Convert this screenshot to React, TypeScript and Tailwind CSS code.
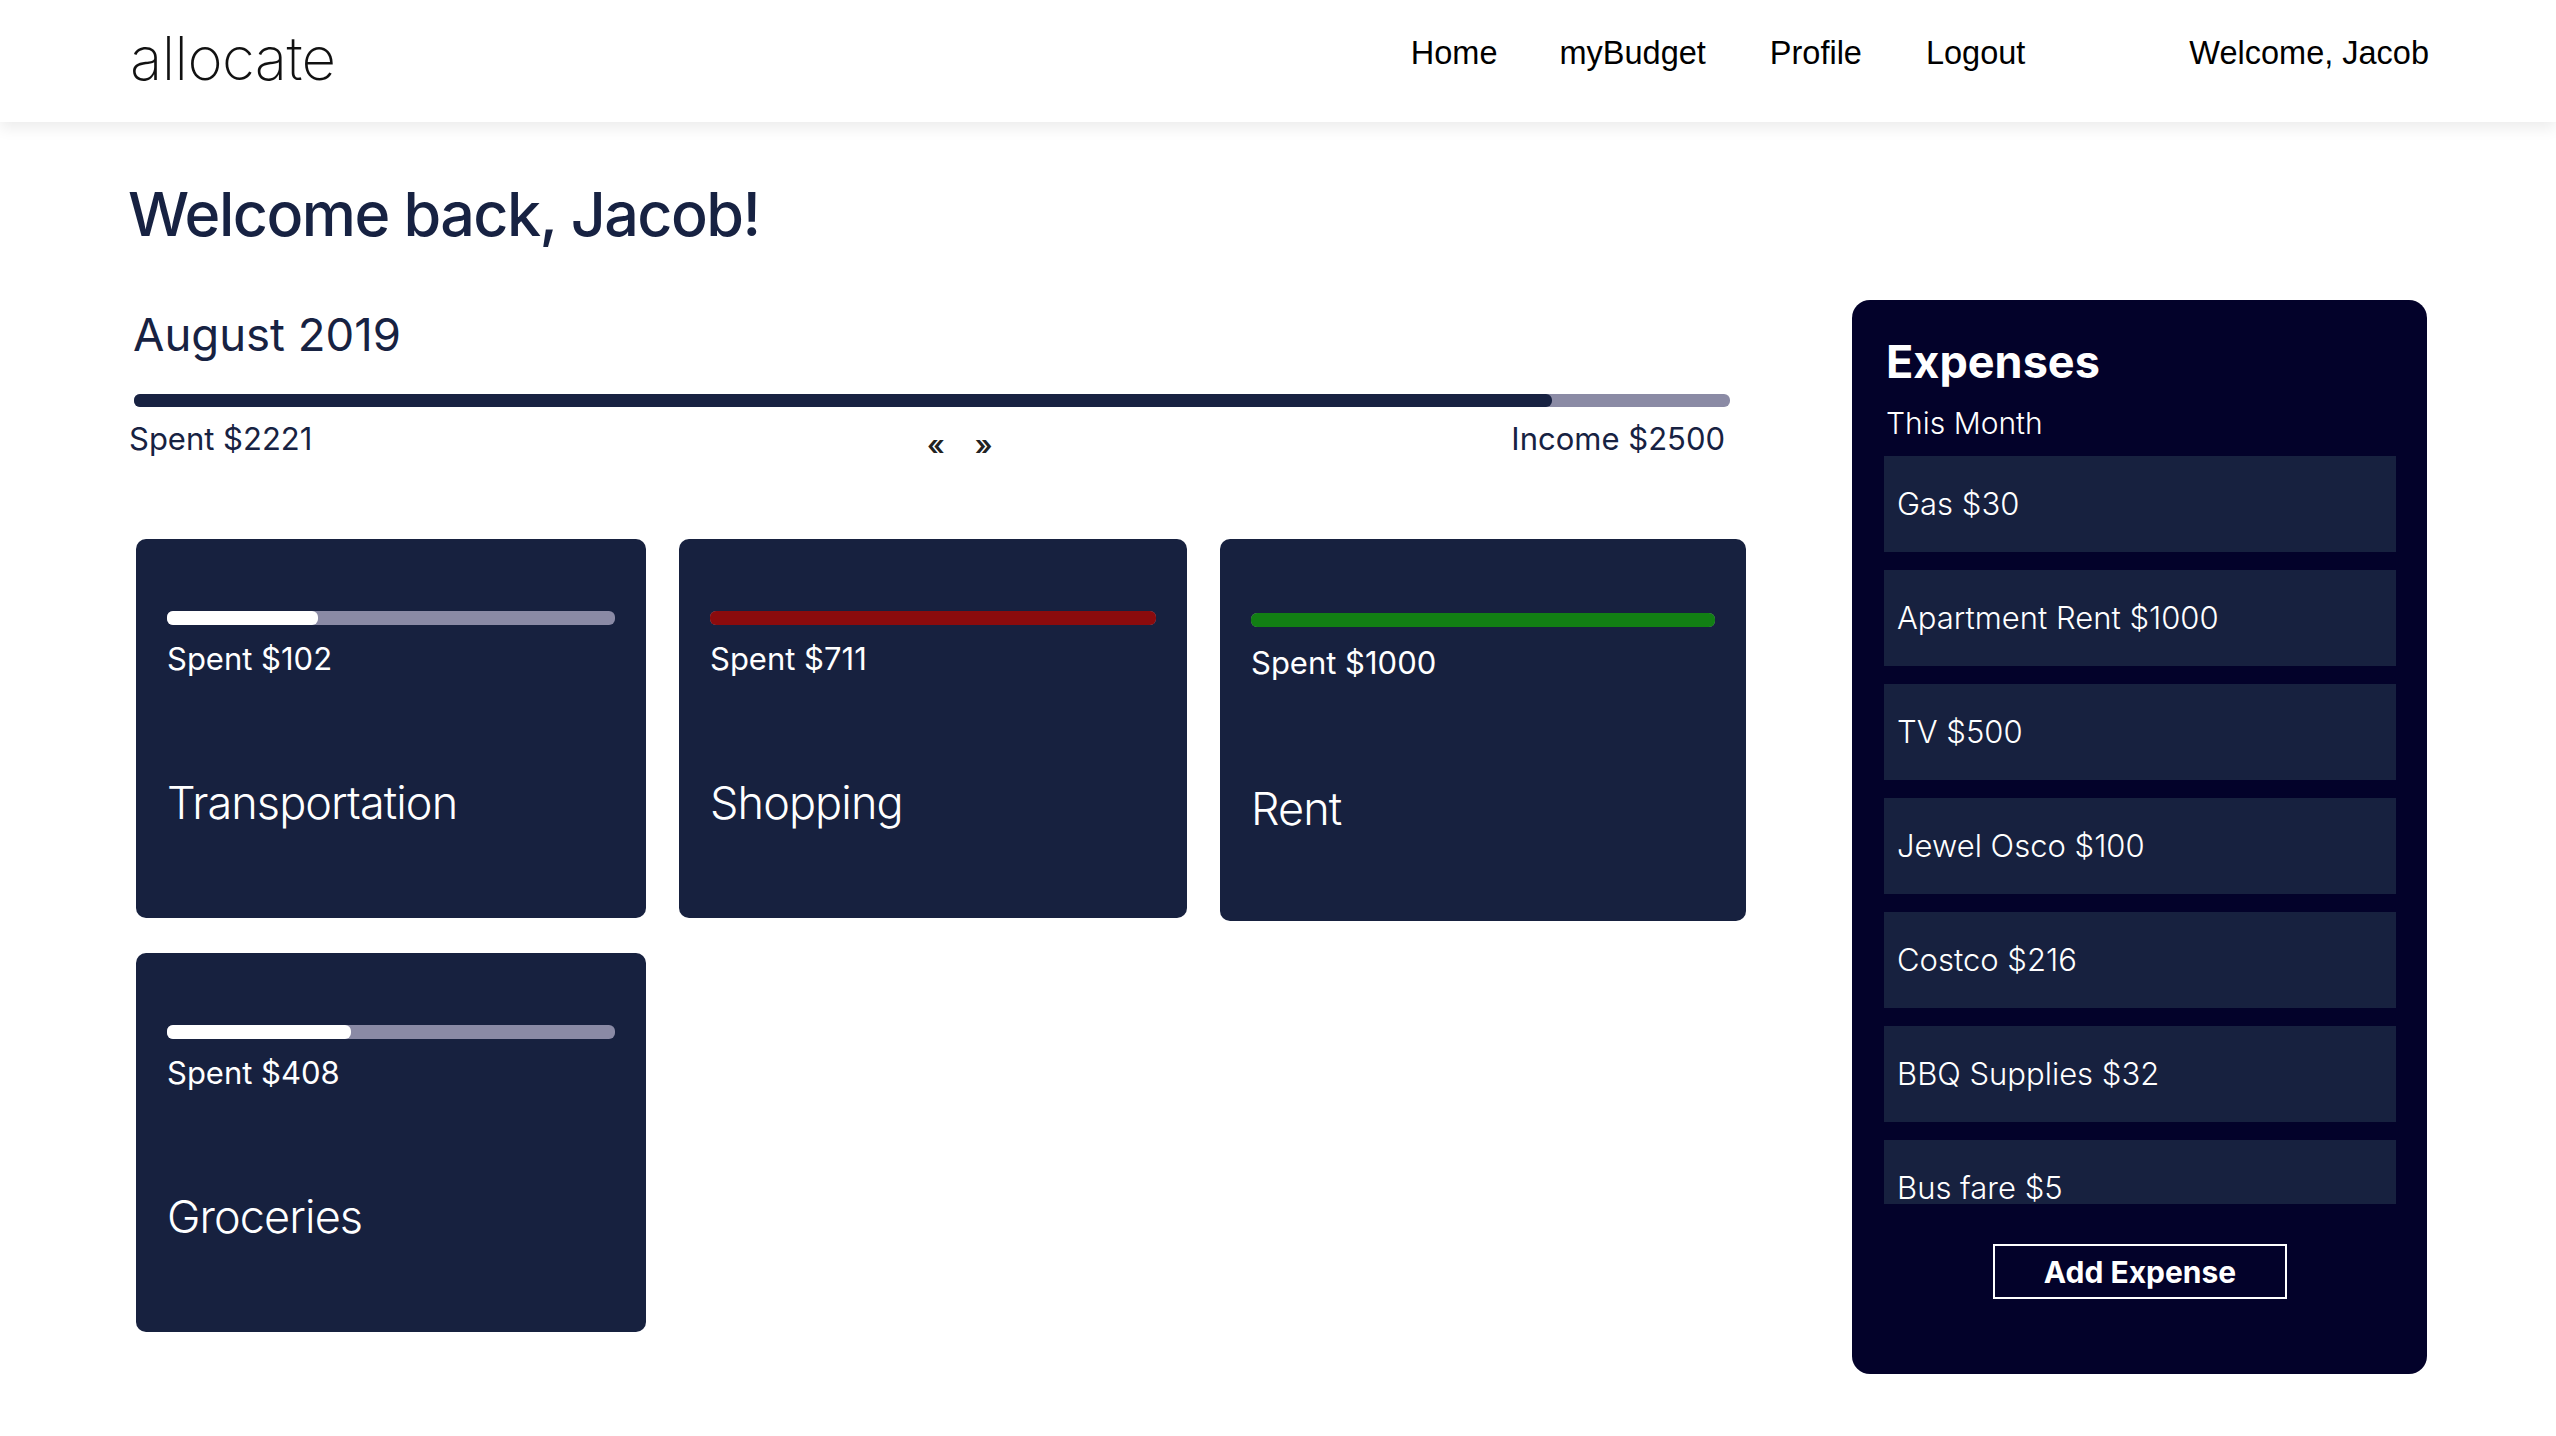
import React from 'react';

type Category = {
  name: string;
  spent: number;
  pct: number;
  fill: string;
  width: string;
  height: string;
  top: string;
  spentGap: string;
  nameGap: string;
};

const categories: Category[] = [
  { name: 'Transportation', spent: 102, pct: 33.7, fill: 'bg-white', width: 'w-[510px]', height: 'h-[379px]', top: 'pt-[72px]', spentGap: 'mt-[18px]', nameGap: 'mt-[106px]' },
  { name: 'Shopping', spent: 711, pct: 100, fill: 'bg-[#8b0b0d]', width: 'w-[508px]', height: 'h-[379px]', top: 'pt-[72px]', spentGap: 'mt-[18px]', nameGap: 'mt-[106px]' },
  { name: 'Rent', spent: 1000, pct: 100, fill: 'bg-[#127f14]', width: 'w-[526px]', height: 'h-[382px]', top: 'pt-[74px]', spentGap: 'mt-[20px]', nameGap: 'mt-[108px]' },
  { name: 'Groceries', spent: 408, pct: 41, fill: 'bg-white', width: 'w-[510px]', height: 'h-[379px]', top: 'pt-[72px]', spentGap: 'mt-[18px]', nameGap: 'mt-[106px]' },
];

const expenses = [
  'Gas $30',
  'Apartment Rent $1000',
  'TV $500',
  'Jewel Osco $100',
  'Costco $216',
  'BBQ Supplies $32',
  'Bus fare $5',
];

function Header() {
  return (
    <header className="relative z-10 flex h-[122px] items-center justify-between bg-white pl-[130px] pr-[127px] shadow-[0_6px_14px_rgba(0,0,0,0.08)]">
      <div className="mb-[6px] font-['Inter'] text-[60px] font-extralight leading-none tracking-[-0.01em] text-[#111]">allocate</div>
      <nav className="mb-4 flex items-center font-['Liberation_Sans'] text-[32.5px] leading-none text-black">
        <a className="mr-[62px]">Home</a>
        <a className="mr-[64px]">myBudget</a>
        <a className="mr-[64px]">Profile</a>
        <a className="mr-[164px]">Logout</a>
        <span>Welcome, Jacob</span>
      </nav>
    </header>
  );
}

function CategoryCard({ c }: { c: Category }) {
  return (
    <div className={`${c.width} ${c.height} ${c.top} rounded-[10px] bg-[#17213f] px-[31px] text-white`}>
      <div className="h-[14px] w-full rounded-[6px] bg-[#8a8aa5]">
        <div className={`h-full rounded-[6px] ${c.fill}`} style={{ width: `${c.pct}%` }} />
      </div>
      <div className={`${c.spentGap} text-[31px] leading-none`}>Spent ${c.spent}</div>
      <div className={`${c.nameGap} text-[45px] font-light leading-none tracking-[-0.02em]`}>{c.name}</div>
    </div>
  );
}

function ExpensesPanel() {
  return (
    <aside className="flex h-[1074px] w-[575px] shrink-0 flex-col rounded-[18px] bg-[#03022a] pl-[32px] pr-[31px] pt-[39px] text-white">
      <h2 className="pl-[2px] text-[45px] font-bold leading-none">Expenses</h2>
      <div className="mt-[24px] pl-[2px] text-[30px] font-light leading-none">This Month</div>
      <div className="mt-[18px] flex h-[748px] flex-col gap-[18px] overflow-hidden">
        {expenses.map((e) => (
          <div key={e} className="flex h-[96px] shrink-0 items-center bg-[#17213f] pl-[13px] text-[31px] font-light">
            {e}
          </div>
        ))}
      </div>
      <div className="mt-[40px] flex justify-center">
        <button className="h-[55px] w-[294px] border-2 border-white text-[30px] font-bold leading-none text-white">
          Add Expense
        </button>
      </div>
    </aside>
  );
}

export default function App() {
  const spent = 2221;
  const income = 2500;

  return (
    <div className="min-h-screen bg-white font-['Inter',sans-serif]">
      <Header />
      <main className="pl-[128px] pr-[129px]">
        <h1 className="mt-[62px] text-[61px] font-medium leading-none tracking-[-0.025em] text-[#172242]">Welcome back, Jacob!</h1>

        <div className="mt-[55px] flex items-start justify-between">
          <div className="pt-[12px] text-[#172242]">
            <div className="ml-[5px] text-[45.5px] leading-none">August 2019</div>
            <div className="ml-[6px] mt-[36px] h-[13px] w-[1596px] rounded-[6px] bg-[#8b8ba5]">
              <div className="h-full rounded-[6px] bg-[#182242]" style={{ width: `${(spent / income) * 100}%` }} />
            </div>
            <div className="ml-[1px] mt-[16px] grid w-[1596px] grid-cols-2 text-[31px] leading-none">
              <span>Spent ${spent}</span>
              <div className="flex items-start justify-between">
                <div className="mt-[8px] flex gap-[30px] text-[28px] font-semibold leading-none text-[#222]">
                  <span>«</span>
                  <span>»</span>
                </div>
                <span>Income ${income}</span>
              </div>
            </div>

            <div className="ml-[8px] mt-[80px] flex w-[1612px] flex-wrap items-start gap-x-[33px] gap-y-[32px]">
              {categories.map((c) => (
                <CategoryCard key={c.name} c={c} />
              ))}
            </div>
          </div>

          <ExpensesPanel />
        </div>
      </main>
    </div>
  );
}
